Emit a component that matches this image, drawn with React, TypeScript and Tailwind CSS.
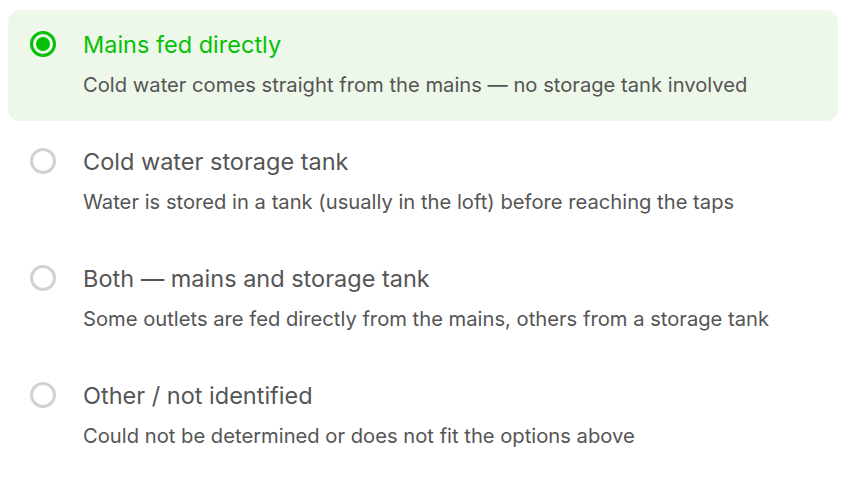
import React from "react";

const options = [
  {
    title: "Mains fed directly",
    desc: "Cold water comes straight from the mains — no storage tank involved",
    selected: true,
  },
  {
    title: "Cold water storage tank",
    desc: "Water is stored in a tank (usually in the loft) before reaching the taps",
    selected: false,
  },
  {
    title: "Both — mains and storage tank",
    desc: "Some outlets are fed directly from the mains, others from a storage tank",
    selected: false,
  },
  {
    title: "Other / not identified",
    desc: "Could not be determined or does not fit the options above",
    selected: false,
  },
];

export default function App() {
  return (
    <div className="flex flex-col gap-[6px] bg-white px-[8px] pt-[10px] font-['Inter',sans-serif] w-[846px] h-[482px]">
      {options.map((o) => (
        <div
          key={o.title}
          className={
            o.selected
              ? "flex h-[111px] items-start gap-[27px] rounded-[12px] bg-[#edf8ea] pl-[22px] pt-[21px]"
              : "flex h-[111px] items-start gap-[27px] rounded-[12px] pl-[22px] pt-[21px]"
          }
        >
          {o.selected ? (
            <div className="flex h-[26px] w-[26px] shrink-0 items-center justify-center rounded-full border-[3px] border-[#06c006]">
              <div className="h-[14px] w-[14px] rounded-full bg-[#06c006]" />
            </div>
          ) : (
            <div className="h-[26px] w-[26px] shrink-0 rounded-full border-[3px] border-[#d2d2d2]" />
          )}
          <div className="flex flex-col gap-[12px]">
            <div
              className={
                o.selected
                  ? "text-[23.5px] leading-[28px] text-[#06c006] whitespace-nowrap"
                  : "text-[23.5px] leading-[28px] text-[#555555] whitespace-nowrap"
              }
            >
              {o.title}
            </div>
            <div className="text-[20.2px] leading-[28px] text-[#555555] whitespace-nowrap">{o.desc}</div>
          </div>
        </div>
      ))}
    </div>
  );
}
